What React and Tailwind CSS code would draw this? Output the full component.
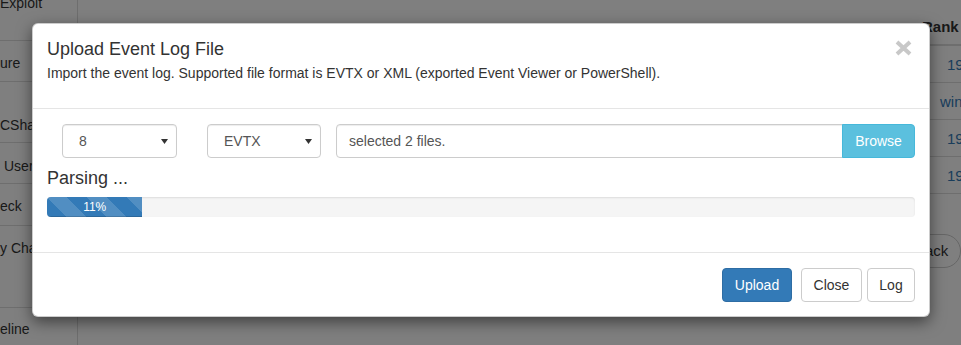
import React from "react";

const sideItems = [
  { text: "Exploit", cls: "h-[41px]", pad: "relative -top-[7px]" },
  { text: "ure", cls: "h-[41px]", pad: "pt-[12px]" },
  { text: "CShadow", cls: "h-[61px]", pad: "pt-[33px]" },
  { text: "User", cls: "h-[41px]", pad: "pt-[13px] pl-[4px]" },
  { text: "eck", cls: "h-[42px]", pad: "pt-[12px]" },
  { text: "y Chart", cls: "h-[82px]", pad: "pt-[12px]" },
  { text: "eline", cls: "h-[60px]", pad: "pt-[11px]" },
];

const rows = [
  { text: "192.168", pad: "pl-[42px]" },
  { text: "win", pad: "pl-[35px]" },
  { text: "192.168", pad: "pl-[42px]" },
  { text: "192.168", pad: "pl-[42px]" },
];

const Select = ({ value, width }) => (
  <div
    className={`${width} h-[34px] shrink-0 flex items-center justify-between pl-[16px] pr-[8px] border border-[#ccc] rounded-[4px] bg-white shadow-[inset_0_1px_1px_rgba(0,0,0,.075)] text-[14px] text-[#555]`}
  >
    <span>{value}</span>
    <svg width="7" height="5" viewBox="0 0 7 5">
      <path d="M0 0h7L3.5 5z" fill="#333" />
    </svg>
  </div>
);

const App = () => {
  return (
    <div className="relative h-[345px] w-[961px] overflow-hidden bg-white text-[#333] font-[family-name:Liberation_Sans,Arial,sans-serif]">
      {/* page behind the modal */}
      <div className="flex h-full">
        <aside className="w-[78px] shrink-0 border-r border-[#ddd] overflow-hidden text-[14px] leading-[20px] whitespace-nowrap">
          {sideItems.map((item, i) => (
            <div key={i} className={`${item.cls} border-b border-[#ddd] box-border`}>
              <div className={item.pad}>{item.text}</div>
            </div>
          ))}
        </aside>
        <main className="flex-1 flex justify-end overflow-hidden">
          <div className="w-[56px] shrink-0 pt-[8px] whitespace-nowrap text-[14px] leading-[20px]">
            <div className="h-[38px] border-b-2 border-[#ddd] pl-[17px] pt-[9px] font-bold text-[15px]">
              Rank
            </div>
            {rows.map((r, i) => (
              <div
                key={i}
                className={`h-[37px] border-b border-[#ddd] pt-[9px] text-[#337ab7] text-[15px] ${r.pad}`}
              >
                {r.text}
              </div>
            ))}
            <div className="mt-[40px] -ml-[3px] inline-flex h-[34px] items-center rounded-full border border-[#ccc] px-[12px] text-[15px]">
              Back
            </div>
          </div>
        </main>
      </div>

      <div className="absolute inset-0 bg-black/50" />

      {/* modal */}
      <div className="absolute left-[32px] top-[23px] w-[898px] rounded-[6px] border border-black/20 bg-white shadow-[0_5px_15px_rgba(0,0,0,.5)]">
        <div className="relative border-b border-[#e5e5e5] px-[14px] pt-[15px] pb-[15px]">
          <h4 className="m-0 text-[18px] leading-[20px] font-normal">Upload Event Log File</h4>
          <p className="mt-[4px] mb-[10px] text-[14px] leading-[20px]">
            Import the event log. Supported file format is EVTX or XML (exported Event Viewer or
            PowerShell).
          </p>
          <button className="absolute right-[17px] top-[16px]">
            <svg width="17" height="16" viewBox="0 0 17 16">
              <path d="M2 2L15 14M15 2L2 14" stroke="#c8c8c8" strokeWidth="4" />
            </svg>
          </button>
        </div>

        <div className="px-[14px] pt-[15px] pb-[15px]">
          <div className="flex items-center">
            <div className="ml-[15px]">
              <Select value="8" width="w-[115px]" />
            </div>
            <div className="ml-[30px]">
              <Select value="EVTX" width="w-[114px]" />
            </div>
            <div className="ml-[15px] flex flex-1 h-[34px]">
              <div className="flex-1 flex items-center px-[12px] border border-[#ccc] rounded-l-[4px] shadow-[inset_0_1px_1px_rgba(0,0,0,.075)] text-[14px] text-[#555]">
                selected 2 files.
              </div>
              <button className="w-[73px] -ml-px border border-[#46b8da] bg-[#5bc0de] rounded-r-[4px] text-white text-[14px]">
                Browse
              </button>
            </div>
          </div>

          <h4 className="mt-[10px] mb-[9px] text-[18px] leading-[20px] font-normal">Parsing ...</h4>

          <div className="h-[20px] mb-[20px] overflow-hidden rounded-[4px] bg-[#f5f5f5] shadow-[inset_0_1px_2px_rgba(0,0,0,.1)]">
            <div
              className="h-full bg-[#337ab7] bg-[linear-gradient(45deg,rgba(255,255,255,.15)_25%,transparent_25%,transparent_50%,rgba(255,255,255,.15)_50%,rgba(255,255,255,.15)_75%,transparent_75%,transparent)] bg-[length:40px_40px] shadow-[inset_0_-1px_0_rgba(0,0,0,.15)] text-center text-[12px] leading-[20px] text-white"
              style={{ width: "11%" }}
            >
              11%
            </div>
          </div>
        </div>

        <div className="flex justify-end border-t border-[#e5e5e5] px-[14px] pt-[15px] pb-[14px]">
          <button className="h-[34px] w-[70px] rounded-[4px] border border-[#2e6da4] bg-[#337ab7] text-white text-[14px]">
            Upload
          </button>
          <button className="ml-[9px] h-[34px] w-[61px] rounded-[4px] border border-[#ccc] bg-white text-[#333] text-[14px]">
            Close
          </button>
          <button className="ml-[5px] h-[34px] w-[48px] rounded-[4px] border border-[#ccc] bg-white text-[#333] text-[14px]">
            Log
          </button>
        </div>
      </div>
    </div>
  );
};

export default App;
